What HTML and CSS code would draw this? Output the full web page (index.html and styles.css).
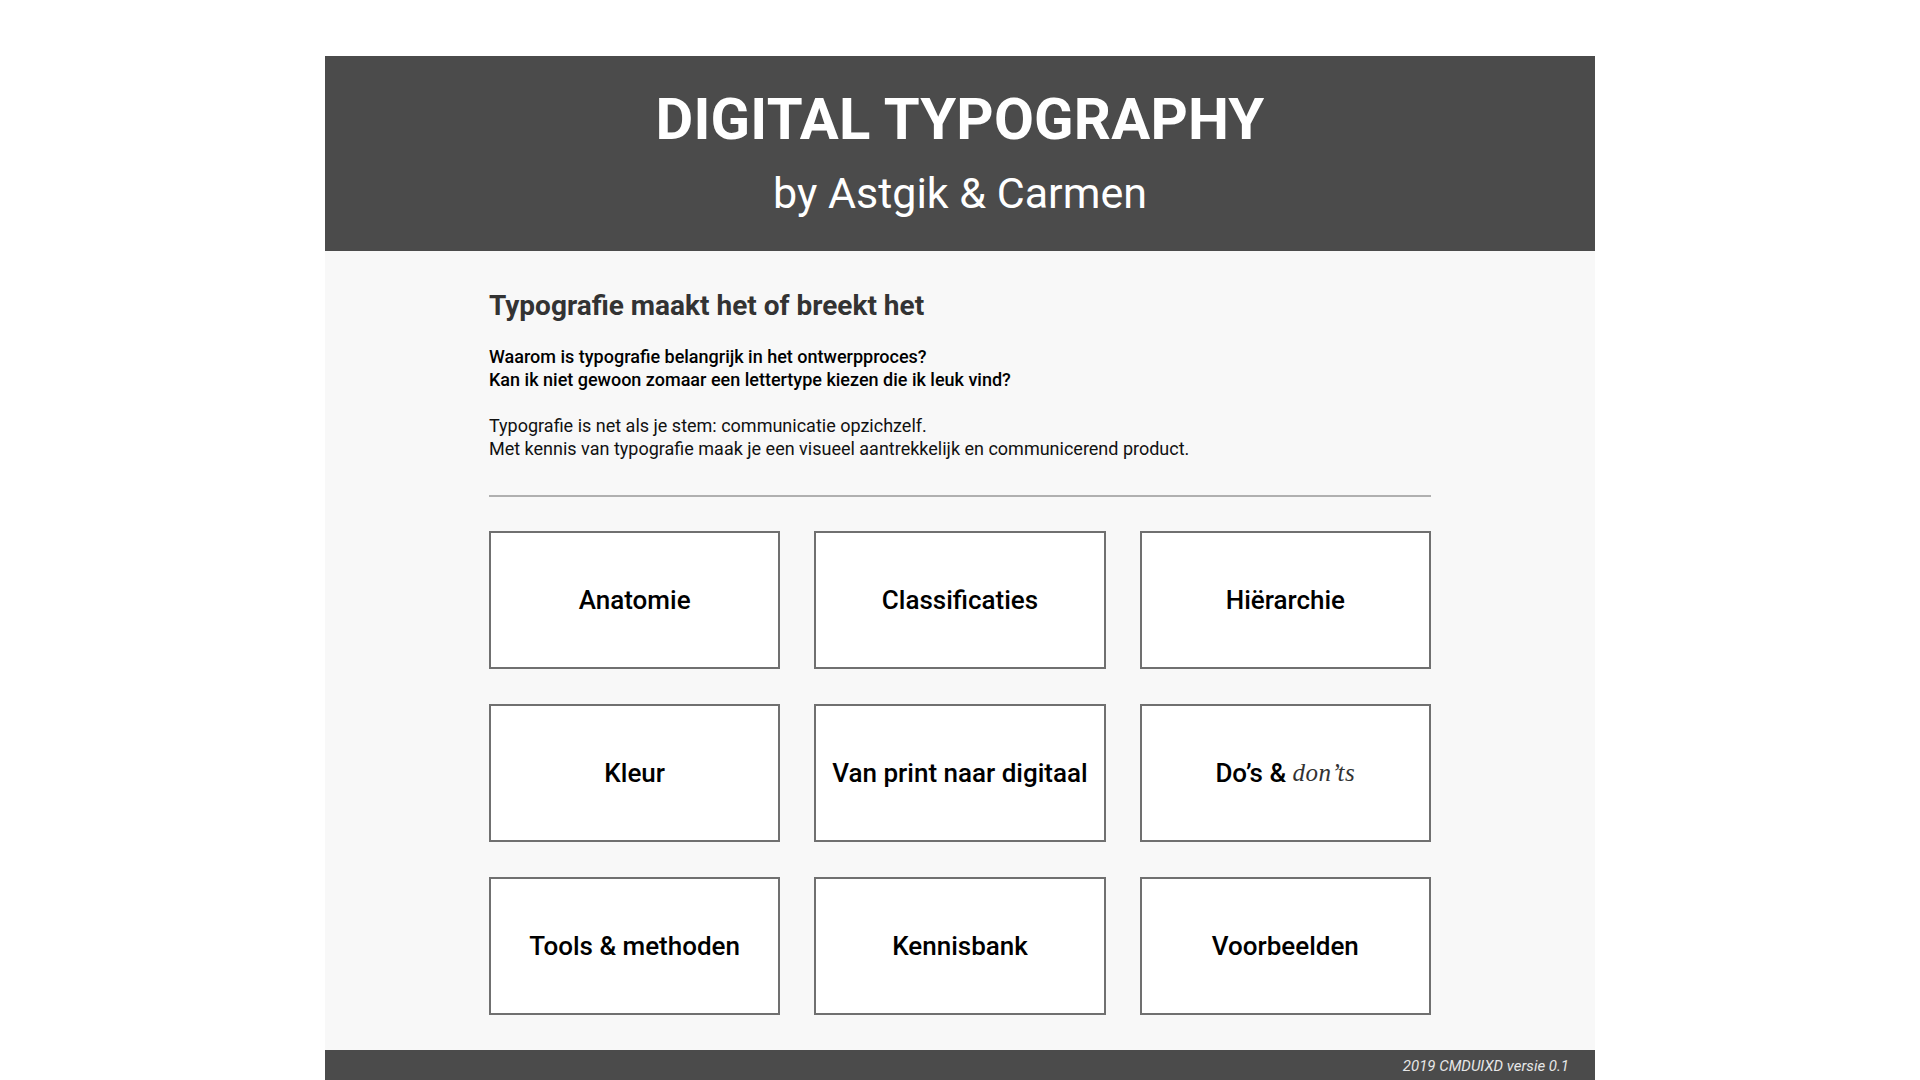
FILE: index.html
```html
<!DOCTYPE html>
<html lang="nl">
<head>
<meta charset="utf-8">
<title>Digital Typography</title>
<link rel="stylesheet" href="styles.css">
</head>
<body>
<div class="page">
  <header class="site-header">
    <h1 class="title">DIGITAL TYPOGRAPHY</h1>
    <p class="subtitle">by Astgik &amp; Carmen</p>
  </header>
  <main class="content">
    <div class="inner">
      <h2 class="heading">Typografie maakt het of breekt het</h2>
      <p class="lead">Waarom is typografie belangrijk in het ontwerpproces?<br>Kan ik niet gewoon zomaar een lettertype kiezen die ik leuk vind?</p>
      <p class="text">Typografie is net als je stem: communicatie opzichzelf.<br>Met kennis van typografie maak je een visueel aantrekkelijk en communicerend product.</p>
      <hr class="divider">
      <nav class="grid">
        <a class="card" href="#">Anatomie</a>
        <a class="card" href="#">Classificaties</a>
        <a class="card" href="#">Hiërarchie</a>
        <a class="card" href="#">Kleur</a>
        <a class="card" href="#">Van print naar digitaal</a>
        <a class="card" href="#">Do’s &amp;&nbsp;<span class="script">don’ts</span></a>
        <a class="card" href="#">Tools &amp; methoden</a>
        <a class="card" href="#">Kennisbank</a>
        <a class="card" href="#">Voorbeelden</a>
      </nav>
    </div>
  </main>
  <footer class="site-footer">2019 CMDUIXD versie 0.1</footer>
</div>
</body>
</html>
```
FILE: styles.css
```css
html, body {
  margin: 0;
  padding: 0;
  background: #ffffff;
}
body {
  font-family: Roboto, "Liberation Sans", Arial, sans-serif;
  color: #000;
}
.page {
  width: 1270px;
  margin: 56px auto 0;
}
.site-header {
  background: #4b4b4b;
  color: #fff;
  height: 195px;
  box-sizing: border-box;
  padding-top: 29px;
  text-align: center;
}
.title {
  margin: 0;
  font-size: 58px;
  font-weight: 700;
  line-height: 68px;
  letter-spacing: 0.2px;
}
.subtitle {
  margin: 15px 0 0;
  font-size: 43px;
  font-weight: 400;
  line-height: 50px;
}
.content {
  background: #f8f8f8;
  padding: 39px 0 35px;
}
.inner {
  width: 942px;
  margin: 0 auto;
}
.heading {
  margin: 0 0 23px;
  font-size: 28px;
  font-weight: 700;
  color: #333;
  line-height: 32px;
}
.lead {
  margin: 0 0 23px;
  font-size: 18px;
  font-weight: 500;
  line-height: 23px;
  color: #000;
}
.text {
  margin: 0;
  font-size: 18px;
  font-weight: 400;
  line-height: 23px;
  color: #111;
}
.divider {
  border: 0;
  height: 2px;
  background: #b0b0b0;
  margin: 35px 0 34px;
}
.grid {
  display: grid;
  grid-template-columns: repeat(3, 1fr);
  column-gap: 34px;
  row-gap: 35px;
}
.card {
  height: 138px;
  box-sizing: border-box;
  border: 2px solid #707070;
  background: #fff;
  display: flex;
  align-items: center;
  justify-content: center;
  text-decoration: none;
  color: #000;
  font-size: 26px;
  font-weight: 500;
}
.script {
  font-family: "Liberation Serif", "DejaVu Serif", serif;
  font-style: italic;
  font-weight: 400;
  font-size: 25px;
  color: #333;
  letter-spacing: 0.5px;
}
.site-footer {
  background: #4b4b4b;
  color: #e6e6e6;
  font-style: italic;
  font-size: 15px;
  text-align: right;
  padding: 7px 26px 14px;
  line-height: 18px;
}
```
